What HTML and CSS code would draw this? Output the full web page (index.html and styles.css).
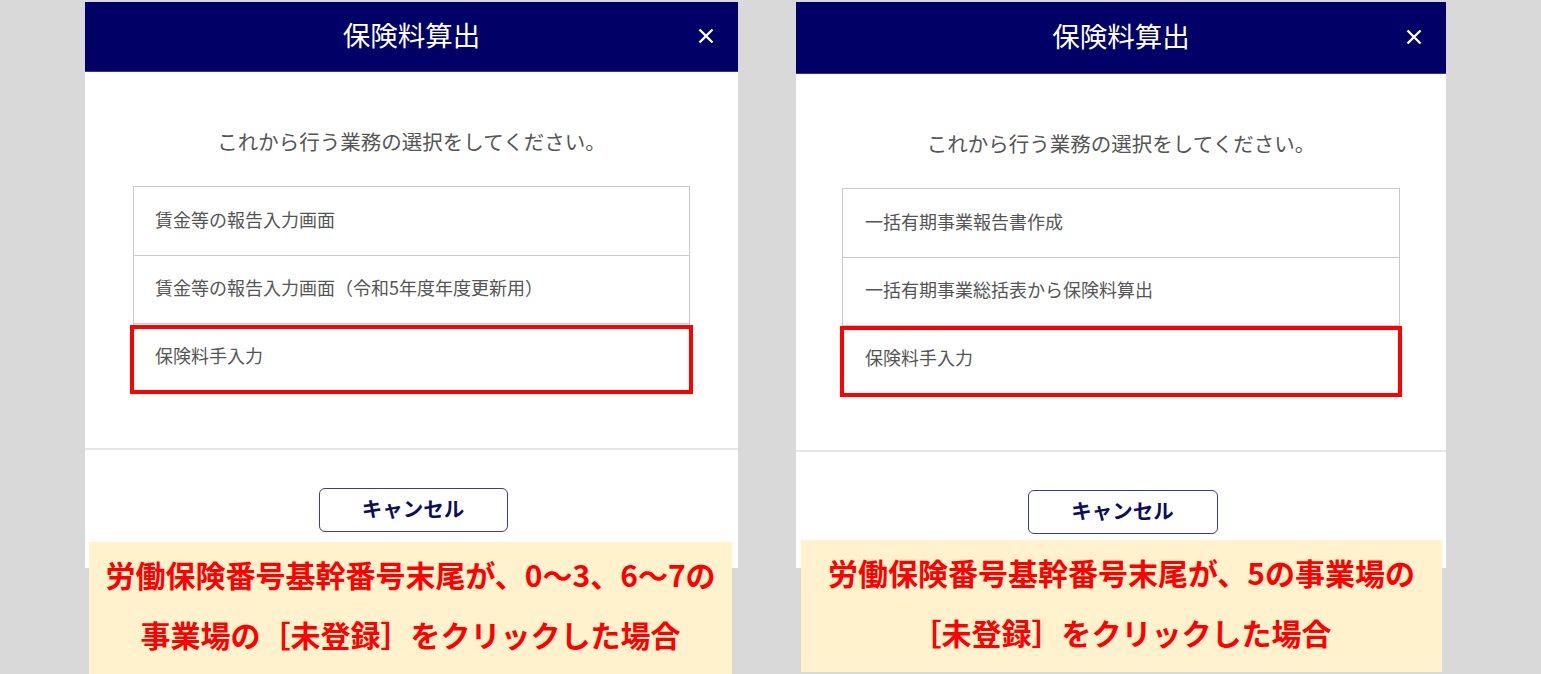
FILE: index.html
```html
<!DOCTYPE html>
<html lang="ja">
<head>
<meta charset="utf-8">
<title>保険料算出</title>
<link rel="stylesheet" href="styles.css">
</head>
<body>
<div class="page">
  <section class="panel panel--a">
    <div class="modal">
      <header class="modal-header">
        <h1 class="modal-title">保険料算出</h1>
        <span class="modal-close" aria-label="閉じる">
          <svg viewBox="0 0 16 16" width="16" height="16"><path d="M1.5 1.5 L14.5 14.5 M14.5 1.5 L1.5 14.5" stroke="#ffffff" stroke-width="2.4" stroke-linecap="butt" fill="none"/></svg>
        </span>
      </header>
      <div class="modal-body">
        <p class="lead">これから行う業務の選択をしてください。</p>
        <ul class="choice-list">
          <li class="choice">賃金等の報告入力画面</li>
          <li class="choice">賃金等の報告入力画面（令和5年度年度更新用）</li>
          <li class="choice choice--marked">保険料手入力</li>
        </ul>
      </div>
      <footer class="modal-footer">
        <button class="btn-cancel" type="button">キャンセル</button>
      </footer>
    </div>
    <div class="callout">労働保険番号基幹番号末尾が、0〜3、6〜7の<br>事業場の［未登録］をクリックした場合</div>
  </section>

  <section class="panel panel--b">
    <div class="modal">
      <header class="modal-header">
        <h1 class="modal-title">保険料算出</h1>
        <span class="modal-close" aria-label="閉じる">
          <svg viewBox="0 0 16 16" width="16" height="16"><path d="M1.5 1.5 L14.5 14.5 M14.5 1.5 L1.5 14.5" stroke="#ffffff" stroke-width="2.4" stroke-linecap="butt" fill="none"/></svg>
        </span>
      </header>
      <div class="modal-body">
        <p class="lead">これから行う業務の選択をしてください。</p>
        <ul class="choice-list">
          <li class="choice">一括有期事業報告書作成</li>
          <li class="choice">一括有期事業総括表から保険料算出</li>
          <li class="choice choice--marked">保険料手入力</li>
        </ul>
      </div>
      <footer class="modal-footer">
        <button class="btn-cancel" type="button">キャンセル</button>
      </footer>
    </div>
    <div class="callout">労働保険番号基幹番号末尾が、5の事業場の<br>［未登録］をクリックした場合</div>
  </section>
</div>
</body>
</html>
```

FILE: styles.css
```css
* {
  box-sizing: border-box;
}

html, body {
  margin: 0;
  padding: 0;
  height: 100%;
}

body {
  background: #d9d9d9;
  font-family: "Noto Sans CJK JP", "Noto Sans", "Liberation Sans", sans-serif;
  overflow: hidden;
}

.page {
  display: flex;
  align-items: flex-start;
  gap: 58px;
  padding: 2px 0 0 85px;
}

.panel {
  display: flex;
  flex-direction: column;
  width: 653px;
}

.panel--b {
  width: 650px;
}

.modal {
  background: #ffffff;
  display: flex;
  flex-direction: column;
  height: 566px;
}

.modal-header {
  position: relative;
  height: 70px;
  background: #000066;
  border-bottom: 1px solid #34348a;
  display: flex;
  align-items: center;
  justify-content: center;
}

.panel--b .modal-header {
  height: 72px;
}

.modal-title {
  margin: 0;
  color: #ffffff;
  font-size: 27.5px;
  font-weight: 400;
  line-height: 1;
  padding-bottom: 3px;
}

.modal-close {
  position: absolute;
  right: 24px;
  top: 26px;
  width: 16px;
  height: 16px;
  display: block;
}

.panel--b .modal-close {
  right: 24px;
  top: 27px;
}

.modal-close svg {
  display: block;
}

.modal-body {
  padding: 54px 48px 56px;
  border-bottom: 2px solid #e6e6e6;
}

.panel--b .modal-body {
  padding-left: 46px;
  padding-right: 46px;
}

.lead {
  margin: 0 0 30px;
  text-align: center;
  font-size: 20.5px;
  line-height: 30px;
  color: #555555;
  font-weight: 400;
}

.choice-list {
  list-style: none;
  margin: 0;
  padding: 0;
  border: 1px solid #c9c9c9;
}

.choice {
  position: relative;
  height: 68px;
  display: flex;
  align-items: center;
  padding-left: 21px;
  padding-bottom: 5px;
  font-size: 18px;
  color: #555555;
}

.panel--b .choice {
  padding-left: 22px;
}

.choice + .choice {
  border-top: 1px solid #c9c9c9;
  height: 68px;
}

.choice--marked::after {
  content: "";
  position: absolute;
  left: -4px;
  right: -4px;
  top: 1px;
  bottom: -3px;
  border: 4px solid #ff0000;
}

.panel--b .choice--marked::after {
  left: -3px;
  right: -3px;
  top: 0;
  bottom: -4px;
}

.modal-footer {
  flex: 1;
  display: flex;
  justify-content: center;
  align-items: flex-start;
  padding-top: 38px;
  padding-left: 3px;
}

.btn-cancel {
  width: 189px;
  height: 44px;
  background: #ffffff;
  border: 1.5px solid #3c3c88;
  border-radius: 6px;
  font-family: "Noto Sans CJK JP", "Noto Sans", sans-serif;
  font-size: 20.5px;
  font-weight: 700;
  color: #0d0d5c;
  padding: 0 0 3px;
  line-height: 1;
}

.panel--b .btn-cancel {
  width: 190px;
}

.callout {
  position: relative;
  margin: -26px 6px 0 4px;
  height: 134px;
  background: #fff2cc;
  color: #ff0000;
  font-weight: 700;
  font-size: 30px;
  line-height: 60px;
  padding-top: 2px;
  text-align: center;
  white-space: nowrap;
}

.panel--b .callout {
  margin: -28px 4px 0 5px;
  height: 132px;
}
```
